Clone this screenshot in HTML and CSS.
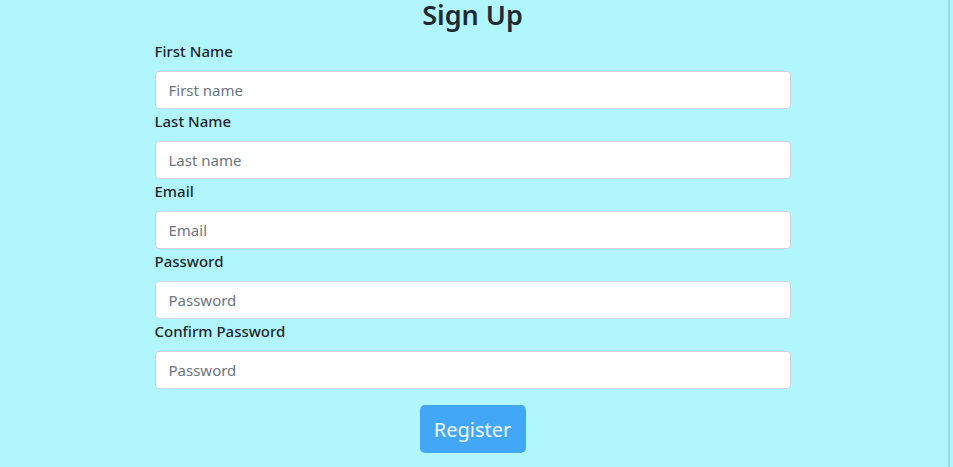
FILE: index.html
```html
<!DOCTYPE html>
<html lang="en">
<head>
<meta charset="utf-8">
<title>Sign Up</title>
<link rel="stylesheet" href="styles.css">
</head>
<body>
<main class="page">
  <h1 class="title">Sign Up</h1>
  <form class="form">
    <div class="field">
      <label class="label" for="fn">First Name</label>
      <input class="input" id="fn" type="text" placeholder="First name">
    </div>
    <div class="field">
      <label class="label" for="ln">Last Name</label>
      <input class="input" id="ln" type="text" placeholder="Last name">
    </div>
    <div class="field">
      <label class="label" for="em">Email</label>
      <input class="input" id="em" type="email" placeholder="Email">
    </div>
    <div class="field">
      <label class="label" for="pw">Password</label>
      <input class="input" id="pw" type="password" placeholder="Password">
    </div>
    <div class="field">
      <label class="label" for="cpw">Confirm Password</label>
      <input class="input" id="cpw" type="password" placeholder="Password">
    </div>
    <div class="actions">
      <button class="btn" type="button">Register</button>
    </div>
  </form>
</main>
</body>
</html>
```

FILE: styles.css
```css
html, body {
  margin: 0;
  padding: 0;
  height: 100%;
  background: #b2f6fd;
}
body {
  font-family: "Noto Sans", "Open Sans", sans-serif;
  color: #212529;
  overflow: hidden;
}
.page {
  width: 950px;
  height: 100%;
  padding-right: 3px;
  border-right: 2px solid #9fd9e0;
  box-sizing: border-box;
  display: flex;
  flex-direction: column;
  align-items: center;
}
.title {
  margin: 0 0 9px;
  font-size: 27px;
  line-height: 30px;
  font-weight: 600;
  color: #1f2a33;
}
.form {
  width: 636px;
  display: flex;
  flex-direction: column;
}
.field {
  display: flex;
  flex-direction: column;
}
.label {
  font-size: 15px;
  line-height: 24px;
  font-weight: 500;
  margin-bottom: 8px;
}
.input {
  height: 38px;
  box-sizing: border-box;
  border: 1px solid #ced4da;
  border-radius: 4px;
  background: #fff;
  padding: 0 13px;
  font-family: inherit;
  font-size: 15px;
  color: #495057;
}
.input::placeholder {
  color: #6c757d;
}
.actions {
  display: flex;
  justify-content: center;
  margin-top: 16px;
}
.btn {
  width: 106px;
  height: 48px;
  border: none;
  border-radius: 5px;
  background: #42a7f7;
  color: #eef7ff;
  font-family: inherit;
  font-size: 20px;
  cursor: pointer;
}
```
